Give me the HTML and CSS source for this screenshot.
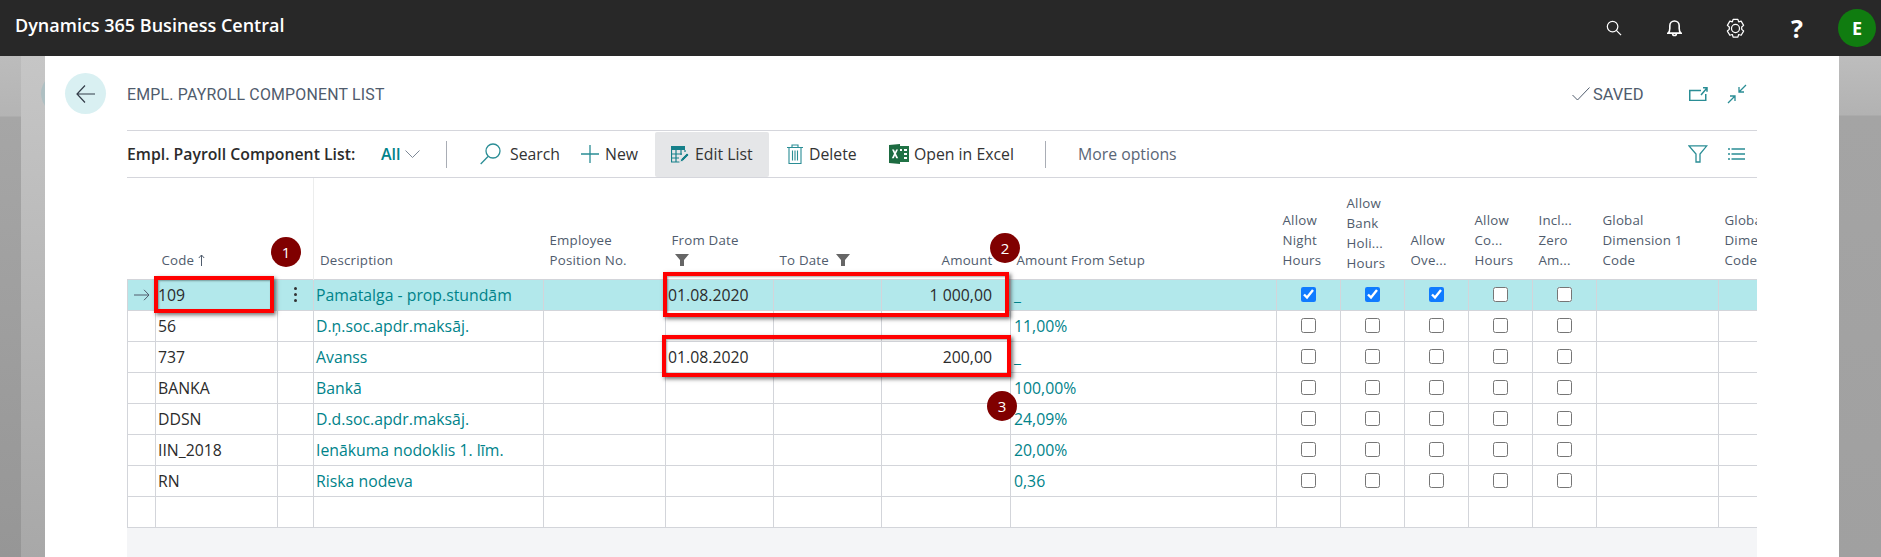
FILE: index.html
```html
<!DOCTYPE html>
<html lang="en">
<head>
<meta charset="utf-8">
<title>Empl. Payroll Component List</title>
<link rel="stylesheet" href="styles.css">
</head>
<body>
<header class="topbar">
  <div class="brand">Dynamics 365 Business Central</div>
  <div class="top-icons">
    <svg class="ti ti-search" viewBox="0 0 17 17"><circle cx="7" cy="7" r="5.6"/><path d="M11 11l5 5"/></svg>
    <svg class="ti ti-bell" viewBox="0 0 16 19"><path d="M1 15c1.6-1 2-2.600 2-5V7a5 5 0 0 1 10 0v3c0 2.400.4 4 2 5z"/><path d="M6 15.500a2 2 0 0 0 4 0"/></svg>
    <svg class="ti ti-gear" viewBox="0 0 22 22"><path d="M8.500 1.500h5l.8 2.600 2.600-.8 2.600 4.400-2 1.800v2.400l2 1.800-2.600 4.400-2.600-.8-.8 2.700h-5l-.8-2.700-2.600.8-2.600-4.400 2-1.800V9.500l-2-1.800 2.600-4.400 2.600.8z" stroke-linejoin="round"/><circle cx="11" cy="11" r="4.200"/></svg>
    <span class="ti-help">?</span>
    <span class="avatar">E</span>
  </div>
</header>
<div class="stage">
  <div class="gutter-left"><div class="gutter-dark"></div><div class="gutter-light"><span class="ghost"></span></div></div>
  <main class="panel">
    <div class="back"><svg viewBox="0 0 20 20"><path d="M19 10H1M9 1.500L1 10l8 8.500"/></svg></div>
    <div class="content">
      <div class="page-head">
        <h1 class="page-title">EMPL. PAYROLL COMPONENT LIST</h1>
        <svg class="saved-check" viewBox="0 0 18 14"><path d="M.5 8l5 5L17.500.5"/></svg>
        <span class="saved">SAVED</span>
        <svg class="ico-share" viewBox="0 0 19 14"><path d="M12 3.500H.75v10h16V7"/><path d="M12 8l6-7M14 .75h4v4" /></svg>
        <svg class="ico-collapse" viewBox="0 0 20 20"><path d="M19 1l-7 7M12 3v5h5M1 19l7-7M3 12h5v5"/></svg>
      </div>
      <div class="toolbar">
        <span class="list-label">Empl. Payroll Component List:</span>
        <span class="all">All</span>
        <svg class="chev" viewBox="0 0 15 8"><path d="M.5.5l7 7 7-7"/></svg>
        <span class="sep sep-a"></span>
        <svg class="ico-find" viewBox="0 0 21 22"><circle cx="13" cy="8" r="7"/><path d="M8 13.500L.7 21"/></svg>
        <span class="act act-search">Search</span>
        <svg class="ico-plus" viewBox="0 0 18 18"><path d="M9 0v18M0 9h18"/></svg>
        <span class="act act-new">New</span>
        <span class="edit-btn">
          <svg class="ico-edit" viewBox="0 0 18 17"><path class="fill-teal" d="M0 0h14v4H0z"/><path class="thin" d="M.5 4v12h8M5 4v12M10 4v5M0 8h11M0 12h8M14 4v2"/><path class="pen" d="M9 16l1-3 6-6 2 2-6 6z"/></svg>
          <span class="act">Edit List</span>
        </span>
        <svg class="ico-trash" viewBox="0 0 16 20"><path d="M0 3.500h16M5 3.500V1h6v2.500M2 3.500v16h12v-16M5.500 6.500v10M8 6.500v10M10.500 6.500v10"/></svg>
        <span class="act act-delete">Delete</span>
        <svg class="ico-excel" viewBox="0 0 20 20"><path class="x-b" d="M8 2h12v16H8z"/><path class="x-l" d="M11 5h2v2h-2zM15 5h3v2h-3zM15 9h3v2h-3zM15 13h3v2h-3z"/><path class="x-a" d="M0 1l11-1v20L0 19z"/><path class="x-t" d="M3 5.500h2l1 2.500 1.200-2.500H9L7 9.800l2.200 4.400h-2L6 11.600l-1.200 2.600h-2l2.200-4.400z"/></svg>
        <span class="act act-excel">Open in Excel</span>
        <span class="sep sep-b"></span>
        <span class="act act-more">More options</span>
        <svg class="ico-filter" viewBox="0 0 20 18"><path d="M.8.8h18L12 9v8H8V9z"/></svg>
        <svg class="ico-lines" viewBox="0 0 17 12"><path d="M0 1h2M3.500 1H17M0 6h2M3.500 6H17M0 11h2M3.500 11H17"/></svg>
      </div>
      <div class="grid-wrap">
        <table class="grid">
          <colgroup>
            <col class="c-arrow"><col class="c-code"><col class="c-menu"><col class="c-desc"><col class="c-pos"><col class="c-date"><col class="c-date">
            <col class="c-amt"><col class="c-setup"><col class="c-chk"><col class="c-chk"><col class="c-chk"><col class="c-chk"><col class="c-chk"><col class="c-dim"><col class="c-dim">
          </colgroup>
          <thead>
            <tr>
              <th></th>
              <th class="th-code">Code <svg class="sort" viewBox="0 0 7 12"><path d="M3.500 12V1M.8 4l2.700-3 2.700 3"/></svg></th>
              <th class="th-freeze"></th>
              <th>Description</th>
              <th>Employee<br>Position No.</th>
              <th>From Date<br><svg class="funnel" viewBox="0 0 14 12"><path d="M0 0h14L9 6v6H5V6z"/></svg></th>
              <th>To Date <svg class="funnel" viewBox="0 0 14 12"><path d="M0 0h14L9 6v6H5V6z"/></svg></th>
              <th class="right">Amount</th>
              <th>Amount From Setup</th>
              <th>Allow<br>Night<br>Hours</th>
              <th class="th-raise">Allow<br>Bank<br>Holi...<br>Hours</th>
              <th>Allow<br>Ove...</th>
              <th>Allow<br>Co...<br>Hours</th>
              <th>Incl...<br>Zero<br>Am...</th>
              <th>Global<br>Dimension 1<br>Code</th>
              <th>Global<br>Dimension 2<br>Code</th>
            </tr>
          </thead>
          <tbody>
            <tr class="current">
              <td class="arrow"><svg viewBox="0 0 16 12"><path d="M0 6h15M10 .8L15 6l-5 5.200"/></svg></td>
              <td>109</td>
              <td class="dots"><span></span><span></span><span></span></td>
              <td class="link">Pamatalga - prop.stundām</td><td></td><td>01.08.2020</td><td></td><td class="right">1 000,00</td><td class="link setup">_</td>
              <td class="box"><input type="checkbox" checked></td><td class="box"><input type="checkbox" checked></td><td class="box"><input type="checkbox" checked></td><td class="box"><input type="checkbox"></td><td class="box"><input type="checkbox"></td><td></td><td></td>
            </tr>
            <tr>
              <td></td><td>56</td><td></td><td class="link">D.ņ.soc.apdr.maksāj.</td><td></td><td></td><td></td><td></td><td class="link setup">11,00%</td>
              <td class="box"><input type="checkbox"></td><td class="box"><input type="checkbox"></td><td class="box"><input type="checkbox"></td><td class="box"><input type="checkbox"></td><td class="box"><input type="checkbox"></td><td></td><td></td>
            </tr>
            <tr>
              <td></td><td>737</td><td></td><td class="link">Avanss</td><td></td><td>01.08.2020</td><td></td><td class="right">200,00</td><td class="link setup">_</td>
              <td class="box"><input type="checkbox"></td><td class="box"><input type="checkbox"></td><td class="box"><input type="checkbox"></td><td class="box"><input type="checkbox"></td><td class="box"><input type="checkbox"></td><td></td><td></td>
            </tr>
            <tr>
              <td></td><td>BANKA</td><td></td><td class="link">Bankā</td><td></td><td></td><td></td><td></td><td class="link setup">100,00%</td>
              <td class="box"><input type="checkbox"></td><td class="box"><input type="checkbox"></td><td class="box"><input type="checkbox"></td><td class="box"><input type="checkbox"></td><td class="box"><input type="checkbox"></td><td></td><td></td>
            </tr>
            <tr>
              <td></td><td>DDSN</td><td></td><td class="link">D.d.soc.apdr.maksāj.</td><td></td><td></td><td></td><td></td><td class="link setup">24,09%</td>
              <td class="box"><input type="checkbox"></td><td class="box"><input type="checkbox"></td><td class="box"><input type="checkbox"></td><td class="box"><input type="checkbox"></td><td class="box"><input type="checkbox"></td><td></td><td></td>
            </tr>
            <tr>
              <td></td><td>IIN_2018</td><td></td><td class="link">Ienākuma nodoklis 1. līm.</td><td></td><td></td><td></td><td></td><td class="link setup">20,00%</td>
              <td class="box"><input type="checkbox"></td><td class="box"><input type="checkbox"></td><td class="box"><input type="checkbox"></td><td class="box"><input type="checkbox"></td><td class="box"><input type="checkbox"></td><td></td><td></td>
            </tr>
            <tr>
              <td></td><td>RN</td><td></td><td class="link">Riska nodeva</td><td></td><td></td><td></td><td></td><td class="link setup">0,36</td>
              <td class="box"><input type="checkbox"></td><td class="box"><input type="checkbox"></td><td class="box"><input type="checkbox"></td><td class="box"><input type="checkbox"></td><td class="box"><input type="checkbox"></td><td></td><td></td>
            </tr>
            <tr>
              <td></td><td></td><td></td><td></td><td></td><td></td><td></td><td></td><td></td><td></td><td></td><td></td><td></td><td></td><td></td><td></td>
            </tr>
          </tbody>
        </table>
        <span class="mark mark-code"></span>
        <span class="mark mark-row1"></span>
        <span class="mark mark-row3"></span>
        <span class="badge badge-1">1</span>
        <span class="badge badge-2">2</span>
        <span class="badge badge-3">3</span>
      </div>
      <div class="grid-foot"></div>
    </div>
  </main>
  <div class="gutter-right"></div>
</div>
</body>
</html>
```
FILE: styles.css
```css
* { box-sizing: border-box; }
html, body { margin: 0; height: 100%; }
body { width: 1881px; height: 557px; overflow: hidden; font-family: "Open Sans", "Noto Sans", sans-serif; color: #2b2b2b; background: #b0b0b0; }
svg { display: block; flex: none; fill: none; }

.topbar { height: 56px; background: #282828; display: flex; align-items: center; justify-content: space-between; color: #fff; }
.brand { margin-left: 15px; font-size: 18px; font-weight: 600; margin-top: -6px; white-space: nowrap; }
.top-icons { display: flex; align-items: center; }
.ti { stroke: #fff; stroke-width: 1.300; }
.ti-search { width: 16px; height: 16px; margin-right: 45px; }
.ti-bell { width: 15px; height: 18px; margin-right: 43px; stroke-width: 1.700; }
.ti-gear { width: 21px; height: 21px; margin-right: 45px; }
.ti-help { font-size: 25px; font-weight: 700; line-height: 1; width: 12px; margin-right: 35px; text-align: center; }
.avatar { width: 38px; height: 38px; border-radius: 50%; background: #107c10; margin-right: 5px; display: flex; align-items: center; justify-content: center; font-size: 18px; font-weight: 700; }

.stage { height: 501px; display: flex; }
.gutter-left { width: 45px; display: flex; flex: none; }
.gutter-dark { width: 21px; background: linear-gradient(to bottom, #bcbcbc 0, #b4b4b4 60px, #a6a6a6 61px, #969696 100%); border-top: 0; }
.gutter-light { width: 24px; background: linear-gradient(to bottom, #c6c6c6, #a8a8a8); position: relative; overflow: hidden; }
.ghost { position: absolute; left: 20px; top: 17px; width: 41px; height: 41px; border-radius: 50%; background: #aebfc2; }
.gutter-right { width: 42px; flex: none; background: linear-gradient(to bottom, #bdbdbd 0, #b2b2b2 59px, #a4a4a4 60px, #a0a0a0 100%); }

.panel { width: 1794px; flex: none; background: #fff; display: flex; padding: 0 82px 0 20px; }
.back { width: 41px; height: 41px; margin: 17px 21px 0 0; flex: none; border-radius: 50%; background: #d9f0f2; display: flex; align-items: center; justify-content: center; }
.back svg { width: 20px; height: 20px; stroke: #333c48; stroke-width: 1.200; }
.content { flex: 1; min-width: 0; display: flex; flex-direction: column; }

.page-head { height: 75px; border-bottom: 1px solid #d5d6dc; display: flex; align-items: center; padding-top: 2px; }
.page-title { margin: 0; font-family: Roboto, sans-serif; font-size: 15.900px; font-weight: 400; color: #505c6d; letter-spacing: .2px; margin-right: auto; white-space: nowrap; }
.saved-check { width: 18px; height: 14px; stroke: #505c6d; stroke-width: 1; margin-right: 3px; }
.saved { font-family: Roboto, sans-serif; font-size: 16.500px; color: #505c6d; width: 50px; margin-right: 46px; }
.ico-share { width: 19px; height: 14px; stroke: #2a8d95; stroke-width: 1.500; margin-right: 19px; }
.ico-collapse { width: 20px; height: 20px; stroke: #2a8d95; stroke-width: 1.300; margin-right: 10px; }

.toolbar { height: 47px; border-bottom: 1px solid #d5d6dc; display: flex; align-items: center; font-size: 15.800px; white-space: nowrap; }
.list-label { font-weight: 600; font-size: 15.800px; width: 254px; flex: none; }
.all { color: #00838a; font-weight: 600; font-size: 16px; width: 24px; }
.chev { width: 15px; height: 8px; stroke: #7d8896; stroke-width: 1; }
.sep { width: 1px; height: 27px; background: #a9adb5; flex: none; }
.sep-a { margin-left: 26px; margin-right: 33px; }
.ico-find { width: 21px; height: 22px; stroke: #2a8d95; stroke-width: 1.300; margin-right: 9px; }
.act { color: #333; }
.act-search { width: 50px; margin-right: 21px; }
.ico-plus { width: 18px; height: 18px; stroke: #2a8d95; stroke-width: 1.300; margin-right: 6px; }
.act-new { width: 34px; margin-right: 16px; }
.edit-btn { width: 114px; height: 45px; background: #e5e6e8; border-radius: 2px; display: flex; align-items: center; padding-left: 16px; flex: none; }
.ico-edit { width: 18px; height: 17px; margin-right: 6px; stroke: none; }
.fill-teal { fill: #16808a; }
.thin { stroke: #16808a; stroke-width: 1.200; }
.pen { fill: #16808a; stroke: #e5e6e8; stroke-width: .8; }
.ico-trash { width: 16px; height: 20px; stroke: #2a8d95; stroke-width: 1.100; margin-left: 18px; margin-right: 6px; }
.act-delete { width: 48px; margin-right: 32px; }
.ico-excel { width: 20px; height: 20px; margin-right: 5px; }
.x-b { fill: #217346; }
.x-l { fill: #fff; }
.x-a { fill: #1d6b41; }
.x-t { fill: #fff; }
.act-excel { width: 99px; }
.sep-b { margin-left: 32px; margin-right: 32px; }
.act-more { color: #5a6676; margin-right: auto; }
.ico-filter { width: 20px; height: 18px; stroke: #2a8d95; stroke-width: 1.300; margin-right: 20px; }
.ico-lines { width: 17px; height: 12px; stroke: #2a8d95; stroke-width: 1.400; margin-right: 12px; }

.grid-wrap { position: relative; height: 350px; overflow: hidden; flex: none; }
.grid { table-layout: fixed; border-collapse: collapse; width: 1713px; font-size: 15.800px; }
.c-arrow { width: 28px; }
.c-code { width: 122px; }
.c-menu { width: 36px; }
.c-desc { width: 230px; }
.c-pos { width: 122px; }
.c-date { width: 108px; }
.c-amt { width: 129px; }
.c-setup { width: 266px; }
.c-chk { width: 64px; }
.c-dim { width: 122px; }
.grid th { height: 101px; vertical-align: bottom; text-align: left; font-size: 13.300px; font-weight: 400; line-height: 20px; color: #505c6d; padding: 0 7px 9px 6px; white-space: nowrap; letter-spacing: .2px; overflow: hidden; }
.grid th.right { text-align: right; padding-right: 18px; }
.grid .th-code { padding-left: 6px; }
.grid .th-freeze { border-right: 1px solid #eceded; }
.grid .th-raise { padding-bottom: 6px; }
.sort { display: inline-block; width: 7px; height: 12px; stroke: #505c6d; stroke-width: 1; vertical-align: -1px; }
.funnel { display: inline-block; width: 16px; height: 12px; fill: #666; vertical-align: -1px; margin-left: 2px; }
.grid td { height: 31px; padding: 0 3px 0 2px; border: 1px solid #d3d5da; white-space: nowrap; overflow: hidden; }
.grid td.right { text-align: right; padding-right: 18px; }
.grid .current td { background: #b2e8eb; }
.link { color: #00838a; }
.grid td.setup { padding-left: 3px; }
.grid .arrow { padding: 0 0 0 6px; }
.arrow svg { width: 16px; height: 12px; stroke: #505c6d; stroke-width: 1; }
.grid td.dots span { display: block; width: 3px; height: 3px; border-radius: 50%; background: #333; margin: 3px auto; }
.grid td.box { text-align: center; padding: 0; }
.box input { width: 15px; height: 15px; margin: 0; display: block; margin-inline: auto; accent-color: #0f7bff; }

.mark { position: absolute; border: 4px solid #f00; box-shadow: 2px 2px 4px rgba(0, 0, 0, .55), inset 1px 1px 2px rgba(0, 0, 0, .35); }
.mark-code { left: 27px; top: 98px; width: 120px; height: 37px; }
.mark-row1 { left: 536px; top: 94px; width: 346px; height: 45px; }
.mark-row3 { left: 535px; top: 157px; width: 349px; height: 42px; }
.badge { position: absolute; width: 30px; height: 30px; border-radius: 50%; background: #800000; color: #fff; font-size: 15px; display: flex; align-items: center; justify-content: center; }
.badge-1 { left: 144px; top: 59px; }
.badge-2 { left: 863px; top: 55px; }
.badge-3 { left: 860px; top: 213px; }
.grid-foot { flex: 1; background: #f4f5f7; }
```
